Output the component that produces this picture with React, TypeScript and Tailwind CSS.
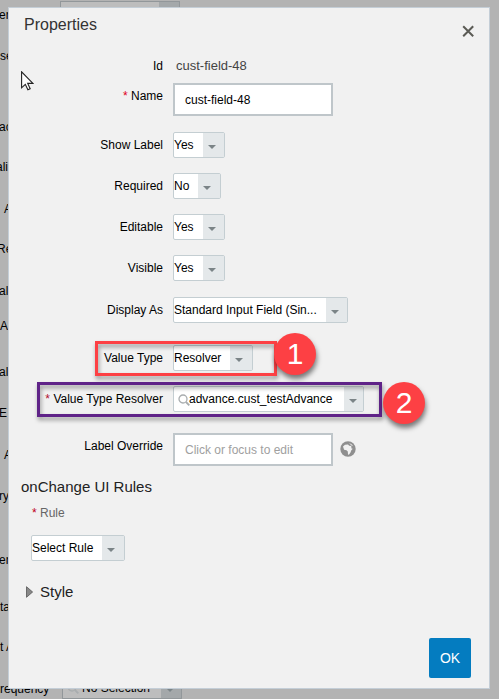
import type { ReactNode } from 'react'
import clsx from 'clsx'

// Labels of the page behind the dialog, top to bottom
const backLabels = [
  { text: 'en', className: 'mt-2 -ml-px' },
  { text: 'se', className: 'mt-[27px]' },
  { text: 'ac', className: 'mt-[57px] -ml-px' },
  { text: 'ali', className: 'mt-[26px] -ml-[4px]' },
  { text: 'A', className: 'mt-[28px] pl-1' },
  { text: 'Re', className: 'mt-[26px] -ml-[3px]' },
  { text: 'al', className: 'mt-[28px] -ml-px' },
  { text: 'A', className: 'mt-[21px]' },
  { text: 'al', className: 'mt-[32px] -ml-px' },
  { text: 'E', className: 'mt-[27px] -ml-px' },
  { text: 'A', className: 'mt-[28px] pl-1' },
  { text: 'ry', className: 'mt-[27px] -ml-px' },
  { text: 'en', className: 'mt-[50px] -ml-px' },
  { text: 'ta', className: 'mt-[33px]' },
  { text: 't A', className: 'mt-[26px]' },
  { text: 'requency', className: 'mt-[28px]' }
]

function Arrow() {
  return (
    <svg viewBox="0 0 8 4" className="h-1 w-2">
      <path d="M0 0h8L4 4z" fill="#7b8487" />
    </svg>
  )
}

function SearchIcon() {
  return (
    <svg viewBox="0 0 12 12" className="size-3 shrink-0" fill="none" stroke="#a9adaf">
      <circle cx="5" cy="5" r="4" strokeWidth="1.3" />
      <path d="M8 8l3.3 3.3" strokeWidth="1.8" />
    </svg>
  )
}

interface SelectProps {
  value: string
  width: string
  arrow?: string
  search?: boolean
}

function Select({ value, width, arrow = 'w-[22px] pl-[5px]', search = false }: SelectProps) {
  return (
    <div className={clsx('flex h-[26px] shrink-0 rounded-[2px] border border-[#c4ced2] bg-white text-black', width)}>
      <div className="flex flex-1 items-center whitespace-nowrap leading-none">
        {search && <span className="-mr-px ml-1 mt-[2px]"><SearchIcon /></span>}
        {value}
      </div>
      <div className={clsx('flex shrink-0 items-center bg-[#e4e8ea] pt-[3px]', arrow)}>
        <Arrow />
      </div>
    </div>
  )
}

interface RowProps {
  label: string
  star?: string
  className: string
  labelClass?: string
  children: ReactNode
}

function Row({ label, star, className, labelClass, children }: RowProps) {
  return (
    <div className={clsx('relative flex items-center gap-[10px]', className)}>
      <div className={clsx('w-[154px] shrink-0 whitespace-nowrap text-right leading-[14px] text-black', labelClass)}>
        {star && <span className={star}>* </span>}
        {label}
      </div>
      {children}
    </div>
  )
}

function Badge({ n, className }: { n: number; className: string }) {
  return (
    <div className={clsx('absolute flex size-[42px] items-center justify-center rounded-full bg-[#fd4044] text-[30px] leading-none text-white shadow-[1px_4px_5px_rgba(0,0,0,0.5)]', className)}>
      {n}
    </div>
  )
}

export default function App() {
  return (
    <div className="relative h-[699px] w-[499px] overflow-hidden bg-[#b3b3b3] font-['Liberation_Sans',Arial,sans-serif] text-[12px]">
      {/* Page behind the dialog */}
      <div className="flex">
        <div className="flex w-[60px] shrink-0 flex-col">
          {backLabels.map((label, i) => (
            <div key={i} className={clsx('flex h-[14px] w-[60px] items-center whitespace-nowrap leading-none text-black', label.className)}>
              {label.text}
            </div>
          ))}
        </div>
        <div className="flex h-[699px] flex-col justify-between">
          <div className="mt-px flex h-[26px] w-[120px] justify-end border border-[#92979a] bg-[#bdbdbd]">
            <div className="w-[20px] bg-[#a4a8aa]" />
          </div>
          <div className="ml-[2px] flex h-[26px] w-[120px] border border-[#92979a] bg-[#bdbdbd]">
            <div className="flex flex-1 items-center gap-[3px] whitespace-nowrap pl-1 pt-1 leading-none text-black">
              <SearchIcon />
              No Selection
            </div>
            <div className="flex w-[20px] items-start bg-[#a4a8aa] pl-[5px] pt-[14px]"><Arrow /></div>
          </div>
        </div>
      </div>

      {/* Dialog */}
      <div className="absolute left-2 top-[7px] flex h-[682px] w-[482px] flex-col border border-[#c4ced7] bg-[#f1f1f1]">
        <div className="flex h-[50px] shrink-0 items-start justify-between px-[15px]">
          <h2 className="mt-[8px] text-[16px] leading-[18px] text-[#333]">Properties</h2>
          <svg viewBox="0 0 12 12" className="mt-[17px] size-3" stroke="#5b5b55" strokeWidth="2" fill="none">
            <path d="M1.2 1.2l10 10M11.2 1.2l-10 10" />
          </svg>
        </div>

        <Row label="Id" className="mt-px h-[14px]">
          <div className="pl-[3px] text-[13px] leading-[14px] text-[#444]">cust-field-48</div>
        </Row>
        <Row label="Name" star="text-[#e00020]" className="mt-[10px] h-[33px]" labelClass="-mt-[7px]">
          <div className="flex h-[33px] w-[160px] items-center border-2 border-[#bfc6ca] bg-white pl-[10px] text-black">cust-field-48</div>
        </Row>
        <Row label="Show Label" className="mt-4">
          <Select value="Yes" width="w-[52px]" arrow="w-[21px] pl-[5px]" />
        </Row>
        <Row label="Required" className="mt-[15px]">
          <Select value="No" width="w-[48px]" />
        </Row>
        <Row label="Editable" className="mt-[15px]">
          <Select value="Yes" width="w-[52px]" arrow="w-[21px] pl-[5px]" />
        </Row>
        <Row label="Visible" className="mt-[15px]">
          <Select value="Yes" width="w-[52px]" arrow="w-[21px] pl-[5px]" />
        </Row>
        <Row label="Display As" className="mt-4">
          <Select value="Standard Input Field (Sin..." width="w-[175px]" arrow="w-[21px] pl-[5px]" />
        </Row>

        {/* Rows with numbered callouts */}
        <Row label="Value Type" className="mt-[22px]">
          <Select value="Resolver" width="w-[80px]" />
          <div className="absolute -top-1 left-[86px] h-[35px] w-[182px] border-3 border-[#fd4044] drop-shadow-[1px_3px_2px_rgba(0,0,0,0.4)]" />
          <Badge n={1} className="-top-[12px] left-[265px]" />
        </Row>
        <Row label="Value Type Resolver" star="text-[#b01030]" className="mt-[15px]">
          <Select value="advance.cust_testAdvance" width="w-[191px]" arrow="w-[19px] pl-[5px]" search />
          <div className="absolute -top-1 left-7 h-[35px] w-[345px] border-3 border-[#5f2388] drop-shadow-[1px_3px_2px_rgba(0,0,0,0.4)]" />
          <Badge n={2} className="-top-[4px] left-[374px]" />
        </Row>

        <Row label="Label Override" className="mt-[21px] h-[33px]" labelClass="-mt-[7px]">
          <div className="flex h-[33px] w-[160px] items-center border-2 border-[#bfc6ca] bg-white pl-[10px] text-[#a0a0a0]">Click or focus to edit</div>
          <svg viewBox="0 0 16 16" className="-ml-[3px] -mt-[2px] size-4">
            <circle cx="8" cy="8" r="7.7" fill="#8f8f8f" />
            <path d="M3 5.5L5 3.7l3-.3 1.2 1.4 2 .2.3 2.4 1.3.4-1.6 1.8-.7 2-1.6 2.2-.9-.4-.2-2.8-1.3-1.3-2.4-.6z" fill="#f1f1f1" />
            <path d="M9 2l2.8 1.3 1.4 2-2-.8z" fill="#d8d8d8" />
          </svg>
        </Row>

        <h3 className="ml-3 mt-3 text-[15px] leading-[18px] text-[#222]">onChange UI Rules</h3>
        <div className="ml-[23px] mt-[10px] leading-[14px] text-[#666]">
          <span className="text-[#c00020]">*</span> Rule
        </div>
        <div className="ml-[22px] mt-[15px]">
          <Select value="Select Rule" width="w-[94px]" />
        </div>

        <div className="ml-[17px] mt-[22px] flex items-center gap-[7px] text-[15px] leading-[18px] text-[#222]">
          <svg viewBox="0 0 7 12" className="h-3 w-[7px]">
            <path d="M.5.7v10.6L6.6 6z" fill="#888" stroke="#555" strokeWidth=".8" />
          </svg>
          Style
        </div>

        <button className="mb-[10px] ml-auto mr-[18px] mt-auto h-10 w-[42px] rounded-[2px] bg-[#047cc0] text-[14px] text-white">OK</button>
      </div>

      {/* Mouse pointer */}
      <svg viewBox="0 0 13 20" className="absolute left-[21px] top-[71px] h-5 w-[13px]">
        <path d="M.6.8v16l3.7-3.5 2.6 5.5 2.3-1.1-2.5-5.3h5.2z" fill="#fff" stroke="#222" strokeWidth="1.1" />
      </svg>
    </div>
  )
}
